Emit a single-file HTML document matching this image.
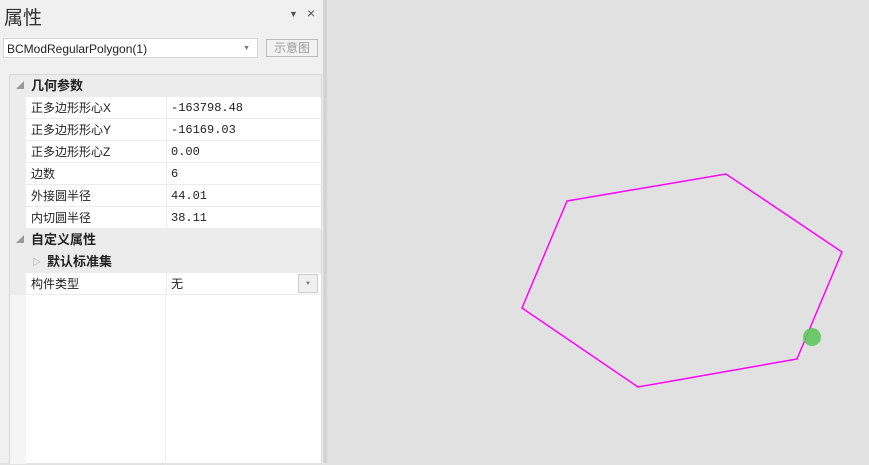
<!DOCTYPE html><html><head><style>
body{margin:0;width:869px;height:463px;background:#e1e1e1;position:relative;overflow:hidden;font-family:"Liberation Sans","Noto Sans CJK SC",sans-serif;}
#p{position:absolute;left:0;top:0;width:323px;height:463px;background:#f0f0f0;}
#sep{position:absolute;left:323px;top:0;width:4px;height:463px;background:#d4d4d4;}
.t{position:absolute;left:4px;top:3px;font-size:19px;color:#333;}
.combo{position:absolute;left:3px;top:38px;width:255px;height:20px;background:#fff;border:1px solid #d6d6d6;font-size:12px;line-height:20px;padding-left:3px;box-sizing:border-box;color:#222}
.btn{position:absolute;left:266px;top:39px;width:52px;height:18px;border:1px solid #bdbdbd;box-sizing:border-box;font-size:12px;color:#999;text-align:center;line-height:16px;background:#f2f2f2}
#g{position:absolute;left:9px;top:74px;width:313px;height:389px;border:1px solid #d9d9d9;border-bottom:none;background:#fff;box-sizing:border-box}
.r{position:absolute;left:0;width:311px;height:22px;font-size:12px;line-height:22px}
.grp{background:#ececec;font-weight:bold;font-size:13px;color:#222}
.l{position:absolute;left:16px;top:0;width:139px;height:21px;border-bottom:1px solid #ececec;padding-left:5px;color:#222}
.v{position:absolute;left:156px;top:0;width:155px;height:21px;border-bottom:1px solid #ececec;border-left:1px solid #ececec;padding-left:4px;font-family:"Liberation Mono","Noto Sans CJK SC",monospace;font-size:12px;color:#222}
.vl{position:absolute;left:155px;top:220px;width:1px;height:170px;background:#ececec}
</style></head><body>
<div id="p">
<div class="t">属性</div>
<div style="position:absolute;left:289px;top:9px;font-size:9px;color:#555">▼</div>
<div style="position:absolute;left:307px;top:5px;font-size:14px;color:#555">×</div>
<div class="combo">BCModRegularPolygon(1)<span style="position:absolute;right:7px;top:0;font-size:7px;color:#777">▼</span></div>
<div class="btn">示意图</div>
<div id="g">
<div style="position:absolute;left:0;top:0;width:16px;height:220px;background:#ececec"></div>
<div style="position:absolute;left:0;top:220px;width:16px;height:169px;background:#f5f5f5"></div>
<div class="r grp" style="top:0"><span style="position:absolute;left:6px;font-size:8px;color:#999">◢</span><span style="position:absolute;left:21px">几何参数</span></div>
<div class="r" style="top:22px"><div class="l">正多边形形心X</div><div class="v">-163798.48</div></div>
<div class="r" style="top:44px"><div class="l">正多边形形心Y</div><div class="v">-16169.03</div></div>
<div class="r" style="top:66px"><div class="l">正多边形形心Z</div><div class="v">0.00</div></div>
<div class="r" style="top:88px"><div class="l">边数</div><div class="v">6</div></div>
<div class="r" style="top:110px"><div class="l">外接圆半径</div><div class="v">44.01</div></div>
<div class="r" style="top:132px"><div class="l">内切圆半径</div><div class="v">38.11</div></div>
<div class="r grp" style="top:154px"><span style="position:absolute;left:6px;font-size:8px;color:#999">◢</span><span style="position:absolute;left:21px">自定义属性</span></div>
<div class="r grp" style="top:176px"><span style="position:absolute;left:22px;font-size:9px;color:#999;font-weight:normal">▷</span><span style="position:absolute;left:37px">默认标准集</span></div>
<div class="r" style="top:198px"><div class="l">构件类型</div><div class="v" style="font-family:'Liberation Sans','Noto Sans CJK SC',sans-serif;font-size:12px">无</div><div style="position:absolute;left:288px;top:1px;width:20px;height:19px;border:1px solid #ccc;background:#f0f0f0;box-sizing:border-box;font-size:6px;color:#777;text-align:center;line-height:18px">▼</div></div>
<div class="vl"></div>
</div>
</div>
<div id="sep"></div>
<svg style="position:absolute;left:0;top:0" width="869" height="463">
<polygon points="567,201 726,174 842,252 797,359 638,387 522,308" fill="none" stroke="#ff00ff" stroke-width="1.5"/>
<circle cx="812" cy="337" r="9" fill="#5ec85e" opacity="0.9"/>
</svg>
</body></html>
